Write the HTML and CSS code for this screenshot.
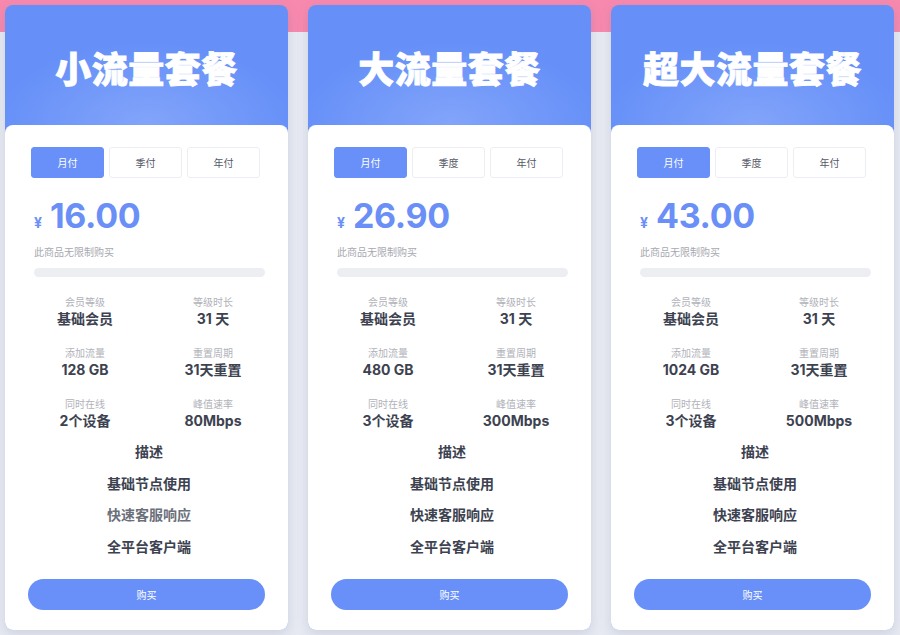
FILE: index.html
```html
<!DOCTYPE html>
<html lang="zh">
<head>
<meta charset="utf-8">
<title>套餐</title>
<link rel="stylesheet" href="styles.css">
</head>
<body>
<div class="plans">
  <div class="card">
    <div class="head"><h2>小流量套餐</h2></div>
    <div class="body">
      <div class="tabs"><span class="tab active">月付</span><span class="tab">季付</span><span class="tab">年付</span></div>
      <div class="price"><span class="cur">¥</span><span class="amt">16.00</span></div>
      <div class="note">此商品无限制购买</div>
      <div class="bar"></div>
      <div class="stats">
        <div class="stat"><div class="lbl">会员等级</div><div class="val">基础会员</div></div>
        <div class="stat"><div class="lbl">等级时长</div><div class="val">31 天</div></div>
        <div class="stat"><div class="lbl">添加流量</div><div class="val">128 GB</div></div>
        <div class="stat"><div class="lbl">重置周期</div><div class="val">31天重置</div></div>
        <div class="stat"><div class="lbl">同时在线</div><div class="val">2个设备</div></div>
        <div class="stat"><div class="lbl">峰值速率</div><div class="val">80Mbps</div></div>
      </div>
      <ul class="desc">
        <li>描述</li>
        <li>基础节点使用</li>
        <li class="muted">快速客服响应</li>
        <li>全平台客户端</li>
      </ul>
      <button class="buy">购买</button>
    </div>
  </div>
  <div class="card">
    <div class="head"><h2>大流量套餐</h2></div>
    <div class="body">
      <div class="tabs"><span class="tab active">月付</span><span class="tab">季度</span><span class="tab">年付</span></div>
      <div class="price"><span class="cur">¥</span><span class="amt">26.90</span></div>
      <div class="note">此商品无限制购买</div>
      <div class="bar"></div>
      <div class="stats">
        <div class="stat"><div class="lbl">会员等级</div><div class="val">基础会员</div></div>
        <div class="stat"><div class="lbl">等级时长</div><div class="val">31 天</div></div>
        <div class="stat"><div class="lbl">添加流量</div><div class="val">480 GB</div></div>
        <div class="stat"><div class="lbl">重置周期</div><div class="val">31天重置</div></div>
        <div class="stat"><div class="lbl">同时在线</div><div class="val">3个设备</div></div>
        <div class="stat"><div class="lbl">峰值速率</div><div class="val">300Mbps</div></div>
      </div>
      <ul class="desc">
        <li>描述</li>
        <li>基础节点使用</li>
        <li>快速客服响应</li>
        <li>全平台客户端</li>
      </ul>
      <button class="buy">购买</button>
    </div>
  </div>
  <div class="card">
    <div class="head"><h2>超大流量套餐</h2></div>
    <div class="body">
      <div class="tabs"><span class="tab active">月付</span><span class="tab">季度</span><span class="tab">年付</span></div>
      <div class="price"><span class="cur">¥</span><span class="amt">43.00</span></div>
      <div class="note">此商品无限制购买</div>
      <div class="bar"></div>
      <div class="stats">
        <div class="stat"><div class="lbl">会员等级</div><div class="val">基础会员</div></div>
        <div class="stat"><div class="lbl">等级时长</div><div class="val">31 天</div></div>
        <div class="stat"><div class="lbl">添加流量</div><div class="val">1024 GB</div></div>
        <div class="stat"><div class="lbl">重置周期</div><div class="val">31天重置</div></div>
        <div class="stat"><div class="lbl">同时在线</div><div class="val">3个设备</div></div>
        <div class="stat"><div class="lbl">峰值速率</div><div class="val">500Mbps</div></div>
      </div>
      <ul class="desc">
        <li>描述</li>
        <li>基础节点使用</li>
        <li>快速客服响应</li>
        <li>全平台客户端</li>
      </ul>
      <button class="buy">购买</button>
    </div>
  </div>
</div>
</body>
</html>
```
FILE: styles.css
```css
* { box-sizing: border-box; }
html, body { margin: 0; padding: 0; }
body {
  width: 900px;
  height: 635px;
  overflow: hidden;
  background: linear-gradient(#f789ae 0, #f789ae 32px, #e7eaf2 32px);
  font-family: "Inter", "Noto Sans CJK SC", sans-serif;
  color: #3d4250;
}
.plans {
  display: flex;
  gap: 20px;
  padding: 5px 0 0 5px;
}
.card {
  width: 283px;
  height: 625px;
  border-radius: 8px;
  overflow: hidden;
  background: radial-gradient(ellipse 150px 80px at 50% 118px, #82a4fa 0%, #6690f8 100%);
  box-shadow: 0 4px 12px rgba(90, 100, 140, 0.18);
  display: flex;
  flex-direction: column;
}
.head {
  height: 120px;
  display: flex;
  align-items: center;
  justify-content: center;
  padding-top: 4px;
}
.head h2 {
  margin: 0;
  color: #fff;
  font-family: "Noto Sans CJK SC", sans-serif;
  font-weight: 900;
  font-size: 36px;
  letter-spacing: 0.5px;
  -webkit-text-stroke: 0.8px #fff;
}
.body {
  flex: 1;
  background: #fff;
  border-radius: 8px 8px 0 0;
  padding: 22px 23px 0 23px;
  display: flex;
  flex-direction: column;
}
.tabs {
  display: flex;
  gap: 5px;
  padding-left: 3px;
}
.tab {
  width: 73px;
  height: 31px;
  border: 1px solid #eceef3;
  border-radius: 3px;
  display: flex;
  align-items: center;
  justify-content: center;
  font-size: 10px;
  color: #555a66;
  font-family: "Noto Sans CJK SC", sans-serif;
}
.tab.active {
  background: #6990f8;
  border-color: #6990f8;
  color: #fff;
}
.price {
  margin-top: 18px;
  padding-left: 6px;
  display: flex;
  align-items: baseline;
  gap: 8px;
  color: #6a8ff7;
  height: 40px;
}
.cur { font-size: 14px; font-weight: 700; }
.amt { font-size: 34px; font-weight: 700; letter-spacing: -0.3px; line-height: 40px; }
.note {
  margin-top: 9px;
  padding-left: 6px;
  font-size: 10px;
  line-height: 14px;
  color: #a7a9b0;
  font-family: "Noto Sans CJK SC", sans-serif;
}
.bar {
  margin: 9px 0 0 6px;
  width: 231px;
  height: 9px;
  border-radius: 5px;
  background: #eceef2;
}
.stats {
  display: grid;
  grid-template-columns: 128px 128px;
  row-gap: 17px;
  margin-top: 18px;
  margin-left: -7px;
  text-align: center;
}
.lbl {
  font-size: 10px;
  line-height: 14px;
  color: #b0b2b9;
  font-family: "Noto Sans CJK SC", sans-serif;
}
.val {
  font-size: 14px;
  line-height: 20px;
  font-weight: 700;
  color: #3d4250;
}
.desc {
  list-style: none;
  margin: 10px 0 0 0;
  padding: 0 0 0 5px;
  text-align: center;
}
.desc li {
  font-size: 14px;
  font-weight: 700;
  line-height: 20px;
  margin-bottom: 11.5px;
  color: #3d4250;
  font-family: "Noto Sans CJK SC", sans-serif;
}
.desc li.muted { color: #6b6f7a; }
.buy {
  margin: 12px 0 0 0;
  width: 237px;
  height: 31px;
  border: none;
  border-radius: 16px;
  background: #6990f8;
  color: #fff;
  font-size: 10px;
  font-family: "Noto Sans CJK SC", sans-serif;
  align-self: center;
}
```
